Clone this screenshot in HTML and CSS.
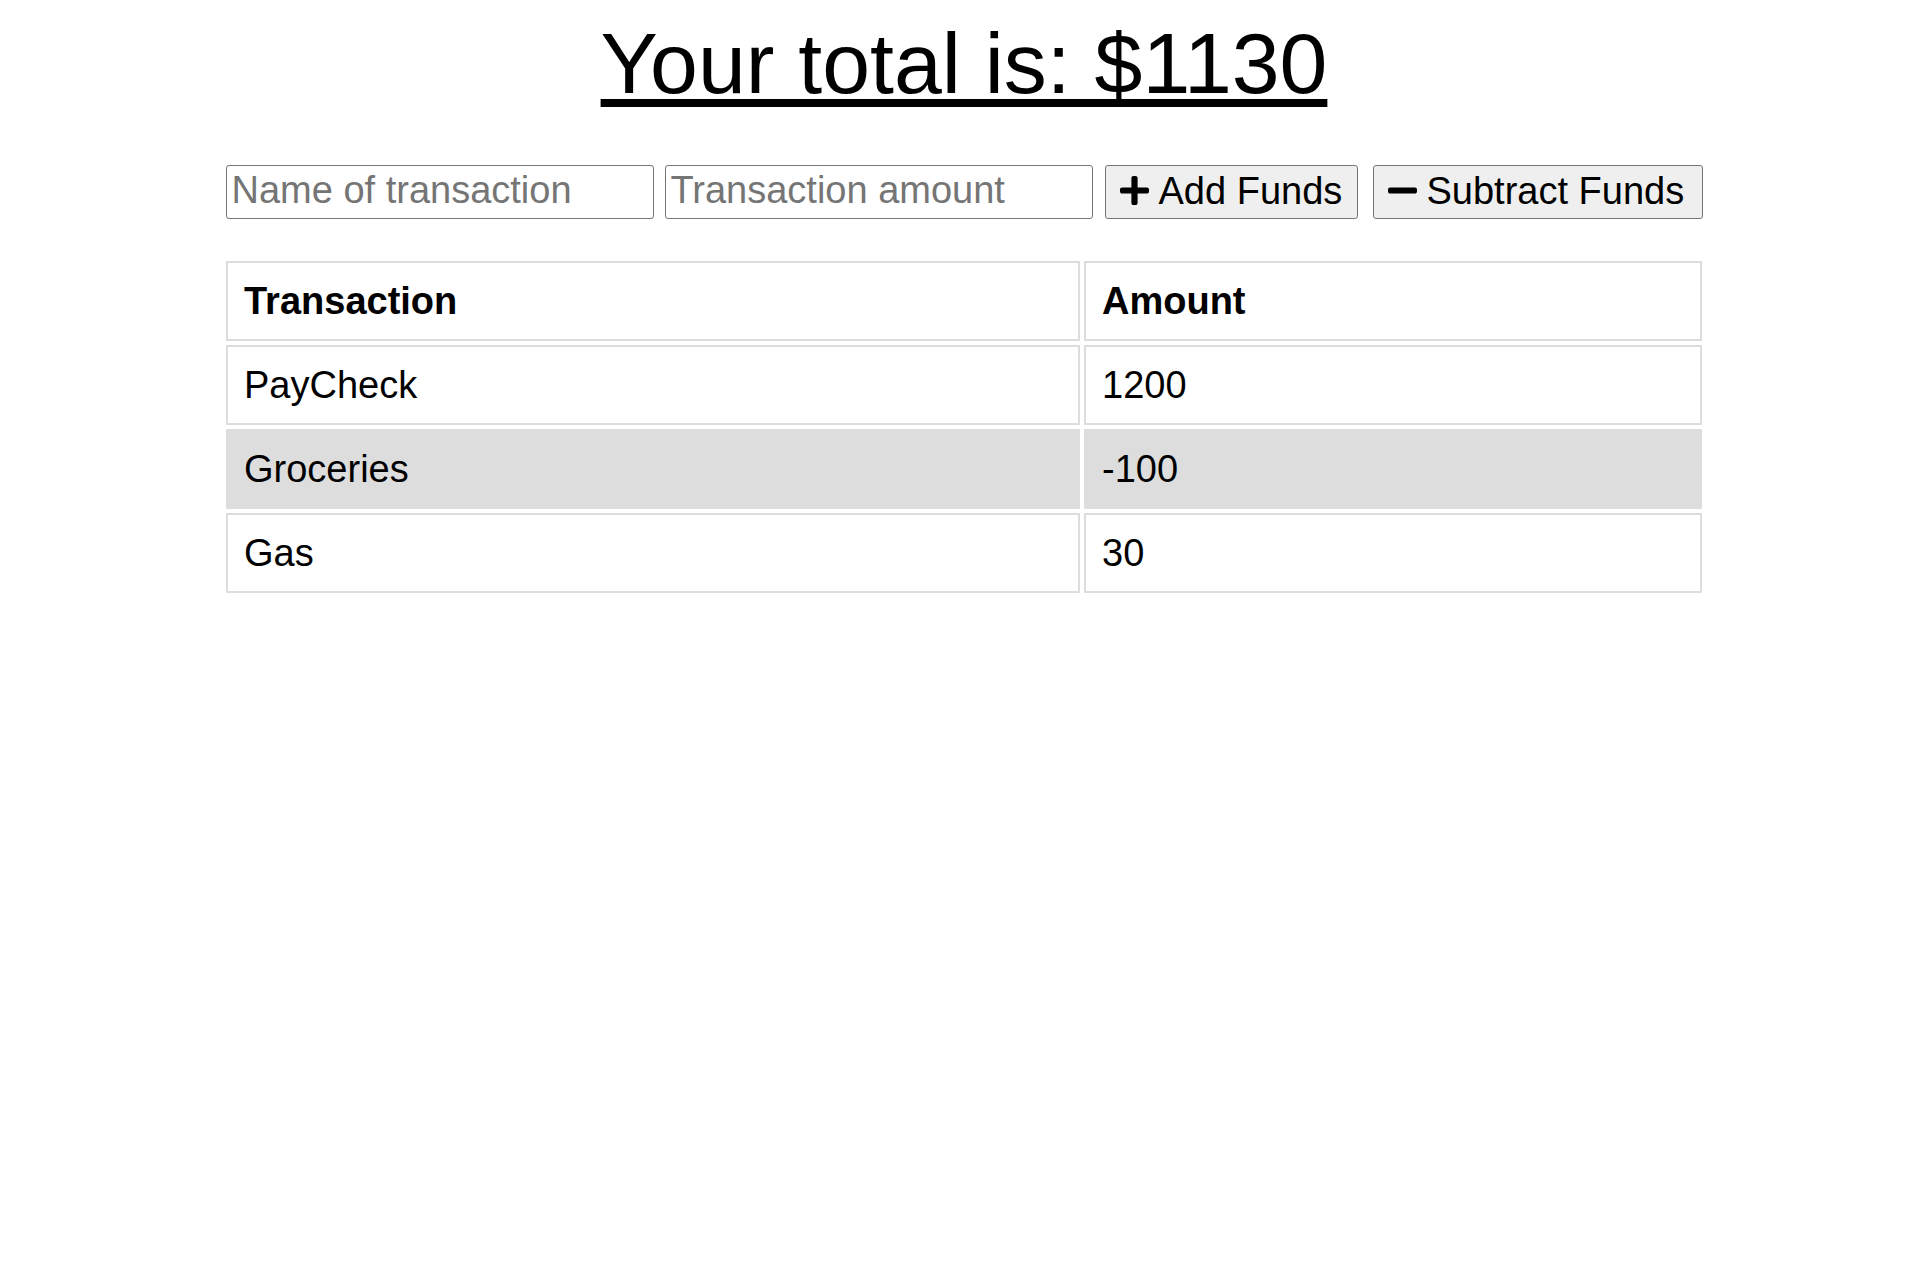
FILE: index.html
```html
<!DOCTYPE html>
<html lang="en">
<head>
<meta charset="utf-8">
<title>Budget Tracker</title>
<link rel="stylesheet" href="styles.css">
</head>
<body>
<main class="app">
  <h1 class="total">Your total is: $1130</h1>
  <form class="entry">
    <input class="field field-name" type="text" placeholder="Name of transaction">
    <input class="field field-amount" type="text" placeholder="Transaction amount">
    <button type="button" class="btn btn-add"><svg class="icon" viewBox="0 32 448 448" aria-hidden="true"><path d="M416 208H272V64c0-17.67-14.33-32-32-32h-32c-17.67 0-32 14.33-32 32v144H32c-17.67 0-32 14.33-32 32v32c0 17.67 14.33 32 32 32h144v144c0 17.67 14.33 32 32 32h32c17.67 0 32-14.33 32-32V304h144c17.67 0 32-14.33 32-32v-32c0-17.67-14.33-32-32-32z"/></svg>Add Funds</button>
    <button type="button" class="btn btn-sub"><svg class="icon" viewBox="0 32 448 448" aria-hidden="true"><path d="M416 208H32c-17.67 0-32 14.33-32 32v32c0 17.67 14.33 32 32 32h384c17.67 0 32-14.33 32-32v-32c0-17.67-14.33-32-32-32z"/></svg>Subtract Funds</button>
  </form>
  <table class="ledger">
    <thead>
      <tr><th class="col-name">Transaction</th><th class="col-amount">Amount</th></tr>
    </thead>
    <tbody>
      <tr><td>PayCheck</td><td>1200</td></tr>
      <tr><td>Groceries</td><td>-100</td></tr>
      <tr><td>Gas</td><td>30</td></tr>
    </tbody>
  </table>
</main>
</body>
</html>
```

FILE: styles.css
```css
* {
  box-sizing: border-box;
}

body {
  margin: 0;
  background: #fff;
  color: #000;
  font-family: "Liberation Sans", Arial, Helvetica, sans-serif;
}

.app {
  width: 1484px;
  margin: 0 auto;
}

.total {
  margin: 14px 0 0;
  font-size: 86px;
  font-weight: 400;
  line-height: normal;
  text-align: center;
  text-decoration: underline;
  text-decoration-thickness: 8px;
  text-underline-offset: 6px;
}

.entry {
  display: flex;
  justify-content: center;
  align-items: center;
  margin: 52px 0 0;
}

.field {
  width: 428px;
  height: 54px;
  margin: 0;
  padding: 0 5px 4px;
  border: 1px solid #767676;
  border-radius: 3px;
  background: #fff;
  color: #000;
  font-family: "Liberation Sans", Arial, Helvetica, sans-serif;
  font-size: 38px;
  outline: none;
}

.field::placeholder {
  color: #757575;
}

.field-name {
  margin-right: 11px;
}

.field-amount {
  margin-right: 12px;
}

.btn {
  display: inline-flex;
  align-items: center;
  height: 54px;
  margin: 0;
  padding: 0 8px 2px 14px;
  border: 1px solid #767676;
  border-radius: 3px;
  background: #efefef;
  color: #000;
  font-family: "Liberation Sans", Arial, Helvetica, sans-serif;
  font-size: 38px;
  white-space: nowrap;
  cursor: pointer;
}

.btn-add {
  width: 253px;
  margin-right: 15px;
}

.btn-sub {
  width: 330px;
}

.icon {
  flex: none;
  width: 29px;
  height: 29px;
  margin: 0 10px 2px 0;
  fill: currentColor;
}

.ledger {
  width: 1484px;
  margin-top: 38px;
  border-collapse: separate;
  border-spacing: 4px;
  table-layout: fixed;
  font-size: 38px;
}

.ledger th,
.ledger td {
  padding: 16px;
  border: 2px solid #ddd;
  text-align: left;
  line-height: 44px;
}

.ledger th {
  font-weight: 700;
}

.col-name {
  width: 854px;
}

.col-amount {
  width: 618px;
}

.ledger tbody tr:nth-child(even) td {
  background: #ddd;
}
```
